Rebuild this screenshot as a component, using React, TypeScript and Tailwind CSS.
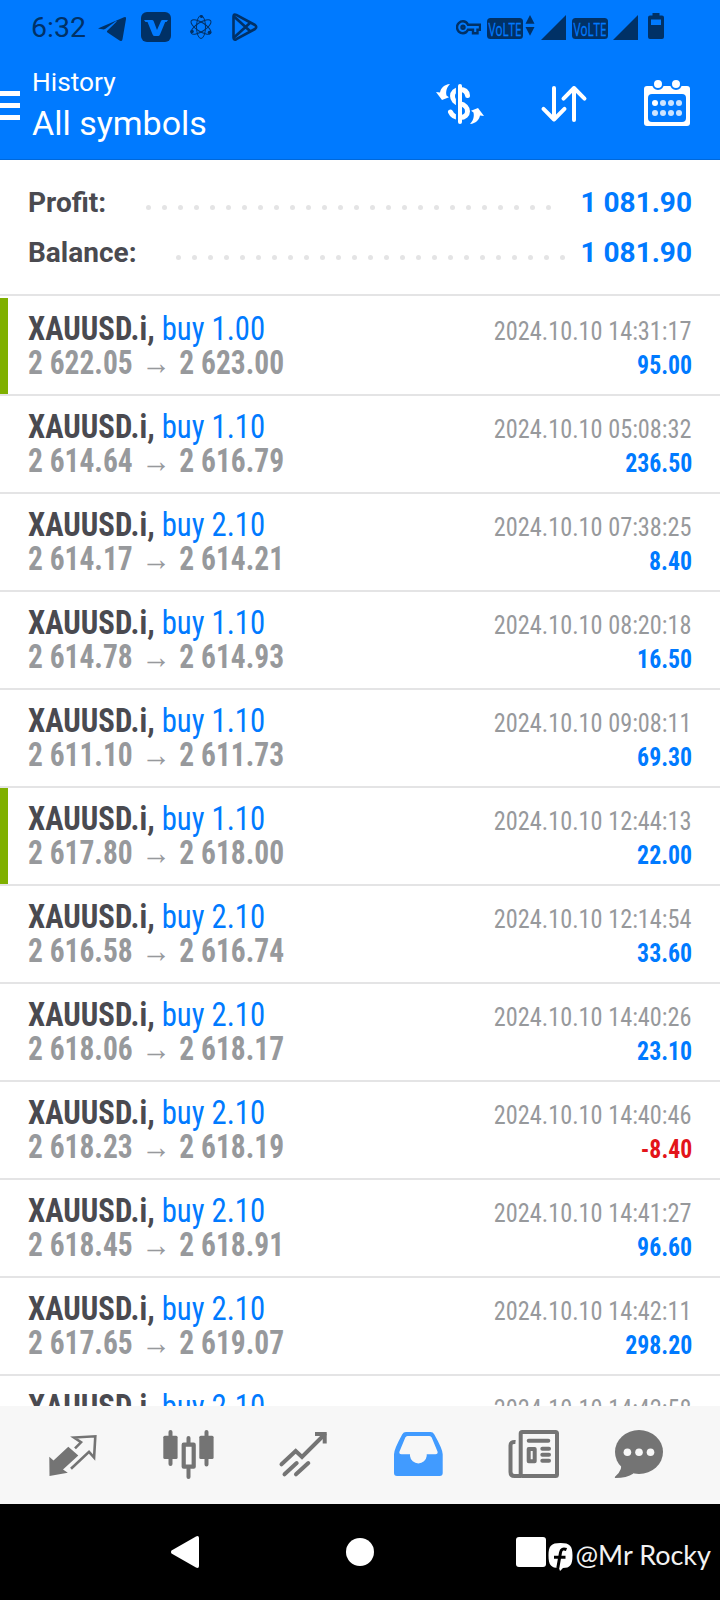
interface Deal {
  lot: string;
  open: string;
  close: string;
  time: string;
  profit: string;
  marked?: boolean;
}

const deals: Deal[] = [
  { lot: "1.00", open: "2 622.05", close: "2 623.00", time: "2024.10.10 14:31:17", profit: "95.00", marked: true },
  { lot: "1.10", open: "2 614.64", close: "2 616.79", time: "2024.10.10 05:08:32", profit: "236.50" },
  { lot: "2.10", open: "2 614.17", close: "2 614.21", time: "2024.10.10 07:38:25", profit: "8.40" },
  { lot: "1.10", open: "2 614.78", close: "2 614.93", time: "2024.10.10 08:20:18", profit: "16.50" },
  { lot: "1.10", open: "2 611.10", close: "2 611.73", time: "2024.10.10 09:08:11", profit: "69.30" },
  { lot: "1.10", open: "2 617.80", close: "2 618.00", time: "2024.10.10 12:44:13", profit: "22.00", marked: true },
  { lot: "2.10", open: "2 616.58", close: "2 616.74", time: "2024.10.10 12:14:54", profit: "33.60" },
  { lot: "2.10", open: "2 618.06", close: "2 618.17", time: "2024.10.10 14:40:26", profit: "23.10" },
  { lot: "2.10", open: "2 618.23", close: "2 618.19", time: "2024.10.10 14:40:46", profit: "-8.40" },
  { lot: "2.10", open: "2 618.45", close: "2 618.91", time: "2024.10.10 14:41:27", profit: "96.60" },
  { lot: "2.10", open: "2 617.65", close: "2 619.07", time: "2024.10.10 14:42:11", profit: "298.20" },
  { lot: "2.10", open: "2 617.65", close: "2 619.07", time: "2024.10.10 14:42:58", profit: "298.20" },
];

const Volte = () => (
  <svg width="36" height="21" viewBox="0 0 36 21">
    <rect width="36" height="21" rx="3.5" fill="#003166" />
    <text x="1.5" y="17.8" fontSize="18.5" fontFamily="'Open Sans', sans-serif" textLength="33" lengthAdjust="spacingAndGlyphs" fill="#007aff" stroke="#007aff" strokeWidth=".3">
      VoLTE
    </text>
  </svg>
);

const Signal = () => (
  <svg width="25" height="25" viewBox="0 0 25 25" fill="#003166">
    <path d="M0 25 25 0v25z" />
  </svg>
);

const StatusBar = () => (
  <div className="h-[54px] flex items-center pl-[31px] pr-14 text-[#003166]">
    <span className="w-[67px] text-[28.5px] leading-[54px] mt-px">6:32</span>
    <svg width="28" height="24" viewBox="0 0 28 24" fill="currentColor" className="mt-[3px]">
      <path d="M1 11 26 .3q2.400-1 2 1.700l-3.500 20.300q-.600 2.700-3 1.200L9.500 15.500q-1.200-.900 0-2l9-8.700q.500-1-.700-.600L7.500 11.700q-1.500 1-3 .600l-3.500-.600q-1.600-.400 0-.8z" />
    </svg>
    <svg width="30" height="30" viewBox="0 0 30 30" className="ml-[15px]">
      <rect width="30" height="30" rx="6" fill="currentColor" />
      <path d="M3 8h8q1.200 0 1.600 1l3.400 9 4-9q.400-1 1.500-1H27l-1.500 2h-1.300l-5.200 12.500q-.600 1.500-2 1.500h-3.300q-1.500 0-2.100-1.500L6.500 10h-2z" fill="#007aff" />
    </svg>
    <svg width="22" height="24" viewBox="0 0 22 24" fill="none" stroke="currentColor" strokeWidth="1" className="ml-[19px]">
      <ellipse cx="11" cy="12" rx="4.500" ry="11.500" />
      <ellipse cx="11" cy="12" rx="4.500" ry="11.500" transform="rotate(57 11 12)" />
      <ellipse cx="11" cy="12" rx="4.500" ry="11.500" transform="rotate(-57 11 12)" />
      <g fill="currentColor" stroke="none">
        <circle cx="11.500" cy="1.500" r="1.500" />
        <circle cx="2" cy="16.500" r="1.800" />
        <circle cx="19.500" cy="17.500" r="1.800" />
      </g>
    </svg>
    <svg width="26" height="28" viewBox="0 0 26 28" fill="none" stroke="currentColor" strokeWidth="2.600" strokeLinejoin="round" className="ml-[20px]">
      <path d="M1.500 3.500q0-3 2.800-1.600L23 12q2.500 2 0 4L4.300 26.200q-2.800 1.300-2.800-1.700z" />
      <path d="M2 3.500 18.500 18.500M2 24.500 18.500 9.500" />
    </svg>

    <div className="ml-auto flex items-center">
      <svg width="25" height="15" viewBox="0 0 25 15" fill="none" stroke="currentColor" strokeWidth="2.400">
        <path d="M12 4.800C11 2.700 9.300 1.300 7 1.300a6 6 0 0 0 0 12c2.300 0 4-1.400 5-3.500h5v3.500h4.500V9.800H24v-5z" />
        <circle cx="7" cy="7.300" r="1.500" />
      </svg>
      <div className="ml-[6px] mt-[3px]">
        <Volte />
      </div>
      <svg width="10" height="21" viewBox="0 0 10 21" fill="currentColor" className="ml-[2px] -mt-1">
        <path d="M5 0 9.500 8.700H.5zM.5 12h9L5 20.700z" />
      </svg>
      <div className="ml-[6px]">
        <Signal />
      </div>
      <div className="ml-[6px] mt-[3px]">
        <Volte />
      </div>
      <div className="ml-[5px]">
        <Signal />
      </div>
      <svg width="16" height="26" viewBox="0 0 16 26" className="ml-[10px] -mt-0.5">
        <path d="M4.500 0h7v2.500H14q2 0 2 2V24q0 2-2 2H2q-2 0-2-2V4.500q0-2 2-2h2.500z" fill="currentColor" />
        <path d="M3 6.500h10V12H3z" fill="#007aff" />
      </svg>
    </div>
  </div>
);

const Header = () => (
  <header className="h-[106px] flex items-start border-b border-[#0068da] text-white">
    <div className="mt-[37px] w-5 flex flex-col gap-[7px]">
      <div className="h-[5px] bg-white" />
      <div className="h-[5px] bg-white" />
      <div className="h-[5px] bg-white" />
    </div>
    <div className="ml-3 mt-[13px]">
      <p className="text-[26.3px] leading-[30px]">History</p>
      <h1 className="mt-[6px] text-[34px] leading-[40px] font-normal">All symbols</h1>
    </div>
    <svg width="48" height="40" viewBox="0 0 48 40" className="ml-auto mt-[30px]">
      <path d="M31.500 11.500C31 7.500 28 5.500 24 5.500c-10 0-10 12.500 0 14.300 10 1.500 10 13.700 0 13.700-5 0-8-2-9.500-5.500" fill="none" stroke="#fff" strokeWidth="5" strokeLinecap="round" />
      <path d="M21 0v40" stroke="#007aff" strokeWidth="2.200" />
      <path d="M24 2v36" stroke="#fff" strokeWidth="4" strokeLinecap="round" />
      <path d="M14 0C8 .5 5 4 4 8.500L0 8l6 8 7-2.700-2.500-1.800C9.500 7 11 3 14 0z" fill="#fff" />
      <path d="M14 0C8 .5 5 4 4 8.500L0 8l6 8 7-2.700-2.500-1.800C9.500 7 11 3 14 0z" fill="#fff" transform="rotate(180 24 20)" />
    </svg>
    <svg width="48" height="40" viewBox="0 0 48 40" fill="none" stroke="#fff" strokeWidth="4" strokeLinecap="round" strokeLinejoin="round" className="ml-[56px] mt-[30px]">
      <path d="M14 4v31.500M3.500 24.900 14 35.500l10.500-10.600M34 36V4M23.500 14.600 34 4l10.500 10.600" />
    </svg>
    <svg width="46" height="47" viewBox="0 -1 46 47" className="ml-[56px] mr-[30px] mt-[25px]">
      <rect y="6" width="46" height="40" rx="3" fill="#fff" />
      <rect x="4" y="14" width="38" height="28" rx="4" fill="#007aff" />
      <g fill="#fff" stroke="#007aff" strokeWidth="2">
        <circle cx="14" cy="4" r="5" />
        <circle cx="32" cy="4" r="5" />
      </g>
      <g fill="#cce4ff">
        <circle cx="11" cy="23" r="3" fill="#fff" />
        <circle cx="19" cy="23" r="3" />
        <circle cx="27" cy="23" r="3" />
        <circle cx="35" cy="23" r="3" />
        <circle cx="11" cy="33" r="3" />
        <circle cx="19" cy="33" r="3" />
        <circle cx="27" cy="33" r="3" />
        <circle cx="35" cy="33" r="3" />
      </g>
    </svg>
  </header>
);

const Dots = ({ count }: { count: number }) => (
  <div className="flex gap-[11px] mt-[8px]">
    {Array.from({ length: count }, (_, i) => (
      <span key={i} className="size-[5px] rounded-full bg-[#e4e4e5]" />
    ))}
  </div>
);

const Summary = () => (
  <section className="h-[136px] mb-[2px] pt-[18px] px-7 border-b-2 border-[#e4e4e5] text-[28px] leading-[50px] font-bold">
    <div className="flex items-center">
      <span className="w-[118px] text-[#4a4a50]">Profit:</span>
      <Dots count={26} />
      <span className="ml-auto text-[#007aff]">1 081.90</span>
    </div>
    <div className="flex items-center">
      <span className="w-[148px] text-[#4a4a50]">Balance:</span>
      <Dots count={25} />
      <span className="ml-auto text-[#007aff]">1 081.90</span>
    </div>
  </section>
);

const DealRow = ({ deal }: { deal: Deal }) => (
  <li className="h-[98px] shrink-0 flex border-b-2 border-[#e4e4e5]">
    <div className={`w-2 ${deal.marked ? "bg-[#7fb000]" : ""}`} />
    <div className="flex-1 pt-[14px] pl-5 pr-7">
      <div className="flex items-baseline justify-between">
        <p className="text-[33px] leading-[34px] origin-left scale-x-[0.931]">
          <b className="font-bold text-[#4a4a50]">XAUUSD.i,</b> <span className="text-[#007aff]">buy {deal.lot}</span>
        </p>
        <span className="text-[26px] leading-6 text-[#97999c] origin-right scale-x-[0.935]">{deal.time}</span>
      </div>
      <div className="flex items-baseline justify-between font-bold">
        <p className="text-[33px] leading-[34px] text-[#97999c] origin-left scale-x-[0.893]">
          {deal.open} <span className="mx-[2px]">→</span> {deal.close}
        </p>
        <span className={`text-[26px] leading-6 origin-right scale-x-[0.915] ${deal.profit.startsWith("-") ? "text-[#e3151a]" : "text-[#007aff]"}`}>
          {deal.profit}
        </span>
      </div>
    </div>
  </li>
);

const TabBar = () => (
  <nav className="h-[98px] bg-[#f7f7f7] pl-12 pt-6 flex items-start gap-[63px] text-[#747474]">
    <svg width="52" height="50" viewBox="0 0 52 50">
      <path d="M1.300 26.700l4.200 3.800L20.300 16.700l10 8.800L15 39.500l4.800 3.200L1.500 46z" fill="currentColor" />
      <path d="M27 18.300l6-6-7-4.800 21.300-1.200-1.200 21.200L41 21.800l-18 17" fill="none" stroke="currentColor" strokeWidth="2.600" />
    </svg>
    <svg width="52" height="50" viewBox="0 0 52 50" fill="currentColor">
      <rect x=".3" y="5.700" width="14.300" height="23.300" rx="1.500" />
      <rect x="36.300" y="5.700" width="14.300" height="23.300" rx="1.500" />
      <path d="M7.500 2v32M43.500 2v32.500M25.500 8v5M25.500 39v8" stroke="currentColor" strokeWidth="4" strokeLinecap="round" />
      <rect x="20.700" y="14.700" width="10" height="22" fill="none" stroke="currentColor" strokeWidth="4.200" strokeLinejoin="round" />
    </svg>
    <svg width="52" height="50" viewBox="0 0 52 50" fill="none" stroke="currentColor" strokeWidth="4" strokeLinecap="round">
      <path d="M3.500 34.300 17.700 21l6.300 6L46.500 4.500M6.500 44.300 18.700 33M18 44.300 30.300 33" />
      <path d="M39 3.900h7.700v7.700" strokeLinecap="square" />
    </svg>
    <svg width="52" height="50" viewBox="0 0 52 50" fill="#419bff">
      <path
        fillRule="evenodd"
        d="M13 2h24.500q2.500 0 3.700 2.200 8.500 15 8.500 20V43q0 3-3 3H4q-3 0-3-3V24.200q0-5 8.300-20Q10.500 2 13 2zm1.500 4q-1.500 0-2.200 1.500L6.500 21.500q-.800 2.700 2 2.700H17V26a8.400 8.400 0 0 0 16.700 0v-1.800h8.800q2.700 0 2-2.700L38.700 7.500Q38 6 36.500 6z"
      />
    </svg>
    <svg width="52" height="50" viewBox="0 0 52 50" fill="none" stroke="currentColor" strokeWidth="4" strokeLinecap="round" strokeLinejoin="round">
      <rect x="12.700" y="2" width="36.300" height="44" rx="1.500" />
      <path d="M7.500 12q-5-.5-5 3.500V42q0 4 4 4H13" strokeLinecap="butt" />
      <path d="M20.700 10.800h19.600M34.300 18.700h6.700M34.300 24.800h6.700M34.300 30.800h6.700M20.700 18.900h6v12.400h-6z" />
    </svg>
    <svg width="52" height="50" viewBox="0 0 52 50" className="-ml-[9px]">
      <path d="M6 32q4 7-5 14.800-.7 1.200.5 1.200 11 0 18-4.500z" fill="currentColor" />
      <ellipse cx="25" cy="22" rx="24" ry="22" fill="currentColor" />
      <g fill="#f7f7f7">
        <circle cx="13.400" cy="22.300" r="3.800" />
        <circle cx="25" cy="22.300" r="3.800" />
        <circle cx="36.500" cy="22.300" r="3.800" />
      </g>
    </svg>
  </nav>
);

const SystemNav = () => (
  <footer className="h-24 bg-black flex items-center pl-[171px]">
    <svg width="28" height="32" viewBox="0 0 28 32" fill="#fff">
      <path d="M.5 14.500 25 .4q3-1 3 1.600v28q0 2.600-3 1.600L.5 17.500q-1-1.500 0-3z" />
    </svg>
    <div className="ml-[147px] size-7 rounded-full bg-white" />
    <div className="ml-[142px] size-[30px] rounded-[3px] bg-white" />
    <svg width="25" height="28" viewBox="0 0 25 28" className="ml-[1.500px] mt-[10px]">
      <path d="M12.500 0C22 0 24.500 3 24.500 12.500S22 25 15 25l-3 3-1-3C3 25 .5 22 .5 12.500S3 0 12.500 0z" fill="#fff" />
      <path d="M18.500 6.500q-5-2-6 3L9.800 25M6 14.200h11.500" fill="none" stroke="#000" strokeWidth="3" />
    </svg>
    <span className="ml-[3px] mt-[6px] whitespace-nowrap font-[Lato,sans-serif] text-[27px] leading-8 text-[#f2f2f2]">@Mr Rocky</span>
  </footer>
);

const App = () => {
  return (
    <div className="w-[720px] h-[1600px] overflow-hidden flex flex-col bg-white font-[Roboto,sans-serif]">
      <div className="bg-[#007aff]">
        <StatusBar />
        <Header />
      </div>
      <Summary />
      <ul className="flex-1 min-h-0 overflow-hidden flex flex-col font-['Roboto_Condensed',Roboto,sans-serif] [font-stretch:75%]">
        {deals.map((deal) => (
          <DealRow key={deal.time} deal={deal} />
        ))}
      </ul>
      <TabBar />
      <SystemNav />
    </div>
  );
};

export default App;
